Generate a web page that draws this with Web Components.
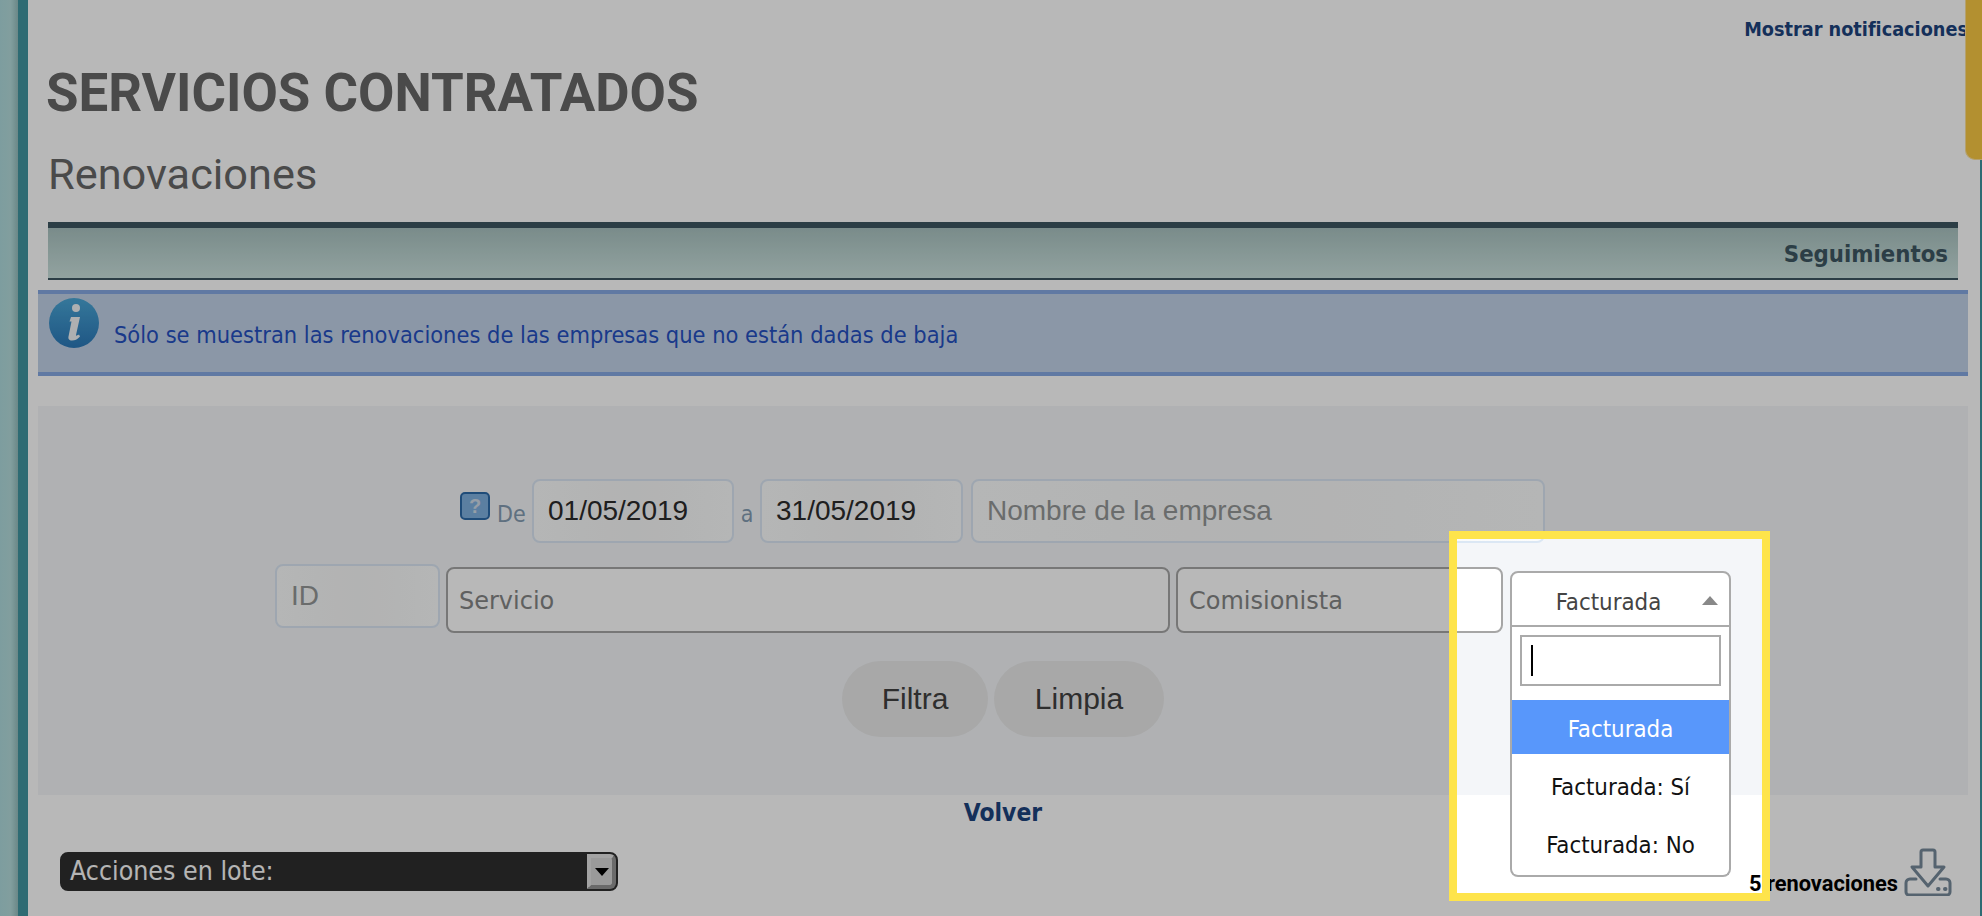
<!DOCTYPE html>
<html lang="es">
<head>
<meta charset="utf-8">
<title>Servicios contratados</title>
<style>
  html, body { margin: 0; height: 916px; overflow: hidden; background: #fff; }
</style>
</head>
<body>
<app-shell>
  <page-heading title="SERVICIOS CONTRATADOS" subtitle="Renovaciones"></page-heading>
  <tab-bar>Seguimientos</tab-bar>
  <info-note>Sólo se muestran las renovaciones de las empresas que no están dadas de baja</info-note>
  <filter-panel></filter-panel>
  <back-link>Volver</back-link>
  <list-footer></list-footer>
</app-shell>
<spot-light></spot-light>

<script>
  const CONDENSED = '"DejaVu Sans Condensed", "DejaVu Sans", sans-serif';
  const ARIAL = '"Liberation Sans", Arial, sans-serif';

  class AppShell extends HTMLElement {
    constructor() {
      super();
      this.attachShadow({ mode: 'open' });
    }

    connectedCallback() {
      this.shadowRoot.innerHTML = `
        <style>
          :host { display: flex; width: 1982px; height: 916px; position: relative; overflow: hidden; }
          .rail { width: 28px; flex: none; display: flex; }
          .rail i { width: 18px; background: linear-gradient(90deg, #aedadd, #b4dcdc 60%, #94bcbc); }
          .rail b { width: 10px; background: #4195a0; }
          main { flex: 1; min-width: 0; padding: 0 14px 0 10px; }
          .notify {
            height: 60px; box-sizing: border-box; padding-top: 18px; text-align: right;
            font: bold 19.700px/24px ${CONDENSED}; color: #1c437d; white-space: nowrap;
          }
          .tab {
            position: absolute; top: 0; right: 0; width: 17px; height: 160px; box-sizing: border-box;
            background: #f9c843; border-left: 1px solid #fbe09a; border-bottom: 1px solid #fbe09a;
            border-bottom-left-radius: 10px;
          }
          .edge { position: absolute; top: 160px; right: 0; bottom: 0; width: 2px; background: #4195a0; }
        </style>
        <div class="rail"><i></i><b></b></div>
        <main>
          <div class="notify">Mostrar notificaciones</div>
          <slot></slot>
        </main>
        <div class="tab"></div>
        <div class="edge"></div>
      `;
    }
  }

  class PageHeading extends HTMLElement {
    constructor() {
      super();
      this.attachShadow({ mode: 'open' });
    }

    connectedCallback() {
      this.shadowRoot.innerHTML = `
        <style>
          :host { display: block; height: 162px; padding-left: 10px; color: #676767; font-family: Roboto, sans-serif; }
          h1 { margin: 0 0 0 -2px; height: 91px; font-size: 52.800px; line-height: 67px; font-weight: 700; }
          h2 { margin: 0; font-size: 43.300px; line-height: 48px; font-weight: 400; }
        </style>
        <h1>${this.getAttribute('title')}</h1>
        <h2>${this.getAttribute('subtitle')}</h2>
      `;
    }
  }

  class TabBar extends HTMLElement {
    constructor() {
      super();
      this.attachShadow({ mode: 'open' });
    }

    connectedCallback() {
      this.shadowRoot.innerHTML = `
        <style>
          :host {
            display: flex; justify-content: flex-end; align-items: center; height: 58px; box-sizing: border-box;
            margin: 0 10px; padding: 2px 10px 0 0;
            border-top: 6px solid #3d5661; border-bottom: 2px solid #3d5661;
            background: linear-gradient(#a9c2c0, #cbe2de);
            font: bold 23.700px ${CONDENSED}; color: #3d5661;
          }
        </style>
        <slot></slot>
      `;
    }
  }

  class InfoNote extends HTMLElement {
    constructor() {
      super();
      this.attachShadow({ mode: 'open' });
    }

    connectedCallback() {
      this.shadowRoot.innerHTML = `
        <style>
          :host {
            display: flex; height: 86px; box-sizing: border-box; margin-top: 10px; padding: 4px 0 0 11px;
            border-top: 4px solid #85a8e2; border-bottom: 4px solid #85a8e2; background: #c1d2e8;
            font: 23.400px ${CONDENSED}; color: #2450c0;
          }
          svg { flex: none; width: 50px; height: 50px; }
          span { margin: 24px 0 0 15px; line-height: 26px; white-space: nowrap; }
        </style>
        <svg viewBox="0 0 50 50">
          <defs>
            <linearGradient id="g" x1="0" y1="0" x2="0" y2="1">
              <stop offset="0" stop-color="#4aa6d6"/>
              <stop offset="1" stop-color="#2b78b8"/>
            </linearGradient>
          </defs>
          <circle cx="25" cy="25" r="25" fill="url(#g)"/>
          <circle cx="27" cy="10" r="4" fill="#f2f4f6"/>
          <path d="M22 19h9l-4 18c0 1 1 1 3-.5l1 2c-3 3-5 4-8 4-3 0-4-2-3.500-4l3-15h-2z" fill="#f2f4f6"/>
        </svg>
        <span><slot></slot></span>
      `;
    }
  }

  class TextField extends HTMLElement {
    constructor() {
      super();
      this.attachShadow({ mode: 'open' });
    }

    connectedCallback() {
      this.shadowRoot.innerHTML = `
        <style>
          :host {
            display: flex; align-items: center; box-sizing: border-box; flex: none;
            height: 64px; padding-left: 14px; border: 2px solid #dbe7f4; border-radius: 8px;
            background: linear-gradient(90deg, #fbfcfc, #f7f8f8 50%, #fbfcfc);
            font: 28px ${ARIAL}; color: #2b2b2b; white-space: nowrap;
          }
          :host([hint]) { color: #939696; }
          :host([plain]) {
            height: 66px; margin-top: 3px; padding: 2px 0 0 11px; border-color: #a6a6a6; border-radius: 8px;
            background: #fff; font: 24px "DejaVu Sans", sans-serif; color: #848585;
          }
        </style>
        <slot></slot>
      `;
    }
  }

  class PillButton extends HTMLElement {
    constructor() {
      super();
      this.attachShadow({ mode: 'open' });
    }

    connectedCallback() {
      this.shadowRoot.innerHTML = `
        <style>
          :host {
            display: flex; align-items: center; justify-content: center; box-sizing: border-box;
            height: 76px; border-radius: 38px; background: #e9e9e9;
            font: 30px ${ARIAL}; color: #414141;
          }
        </style>
        <slot></slot>
      `;
    }
  }

  class SelectBox extends HTMLElement {
    constructor() {
      super();
      this.attachShadow({ mode: 'open' });
    }

    connectedCallback() {
      this.shadowRoot.innerHTML = `
        <style>
          :host {
            display: block; position: relative; flex: none; width: 221px; height: 56px; margin-top: 7px;
            font: 23.800px ${CONDENSED}; color: #111;
          }
          .control {
            height: 56px; box-sizing: border-box; display: flex; align-items: center; justify-content: center;
            padding: 6px 24px 0 0; background: #fff; border: 2px solid #aaa; border-radius: 8px 8px 0 0;
            color: #444;
          }
          .arrow {
            position: absolute; left: 192px; top: 25px; width: 0; height: 0;
            border: 8px solid transparent; border-top: 0; border-bottom: 9px solid #888;
          }
          .menu {
            position: absolute; left: 0; top: 56px; width: 221px; height: 250px; box-sizing: border-box;
            background: #fff; border: 2px solid #aaa; border-top: 0; border-radius: 0 0 8px 8px;
            padding-top: 8px;
          }
          .search {
            box-sizing: border-box; height: 51px; margin: 0 8px 14px; border: 2px solid #aaa;
            display: flex; align-items: center; padding-left: 9px;
          }
          .search i { width: 2px; height: 31px; background: #000; }
          .opt {
            height: 54px; box-sizing: border-box; padding-top: 3px; margin-bottom: 4px;
            display: flex; align-items: center; justify-content: center;
          }
          .opt.on { background: #5897fb; color: #fff; }
        </style>
        <div class="control">Facturada</div>
        <div class="arrow"></div>
        <div class="menu">
          <div class="search"><i></i></div>
          <div class="opt on">Facturada</div>
          <div class="opt">Facturada: Sí</div>
          <div class="opt">Facturada: No</div>
        </div>
      `;
    }
  }

  class FilterPanel extends HTMLElement {
    constructor() {
      super();
      this.attachShadow({ mode: 'open' });
    }

    connectedCallback() {
      this.shadowRoot.innerHTML = `
        <style>
          :host {
            display: flex; flex-direction: column; align-items: center; height: 389px; box-sizing: border-box;
            margin-top: 30px; padding-top: 73px; background: #f4f6f9;
          }
          .row { display: flex; align-items: flex-start; }
          .one { height: 85px; }
          .two { height: 97px; }
          .label { font: 23px/64px ${CONDENSED}; color: #849cb2; padding-top: 3px; height: 61px; }
          .help { flex: none; width: 30px; height: 28px; margin: 13px 7px 0 1px; }
          .btns { display: flex; gap: 6px; }
        </style>
        <div class="row one">
          <svg class="help" viewBox="0 0 30 28">
            <rect x="1" y="1" width="28" height="26" rx="4" fill="#7fb0e0" stroke="#2c6aa8" stroke-width="2"/>
            <text x="15" y="21" text-anchor="middle" font-family="Liberation Sans" font-weight="700" font-size="20" fill="#cfdbe8">?</text>
          </svg>
          <span class="label" style="width:35px">De</span>
          <text-field style="width:202px">01/05/2019</text-field>
          <span class="label" style="width:26px;text-align:center">a</span>
          <text-field style="width:203px">31/05/2019</text-field>
          <text-field hint style="width:574px;margin:0 2px 0 8px">Nombre de la empresa</text-field>
        </div>
        <div class="row two">
          <text-field hint style="width:165px">ID</text-field>
          <text-field plain style="width:724px;margin-left:6px">Servicio</text-field>
          <text-field plain style="width:327px;margin-left:6px">Comisionista</text-field>
          <select-box style="margin-left:7px"></select-box>
        </div>
        <div class="btns">
          <pill-button style="width:146px">Filtra</pill-button>
          <pill-button style="width:170px">Limpia</pill-button>
        </div>
      `;
    }
  }

  class BackLink extends HTMLElement {
    constructor() {
      super();
      this.attachShadow({ mode: 'open' });
    }

    connectedCallback() {
      this.shadowRoot.innerHTML = `
        <style>
          :host {
            display: block; height: 50px; box-sizing: border-box; padding-top: 4px; text-align: center;
            font: bold 24.400px/28px ${CONDENSED}; color: #1c437d;
          }
        </style>
        <slot></slot>
      `;
    }
  }

  class ListFooter extends HTMLElement {
    constructor() {
      super();
      this.attachShadow({ mode: 'open' });
    }

    connectedCallback() {
      this.shadowRoot.innerHTML = `
        <style>
          :host { display: flex; align-items: flex-start; padding: 7px 16px 0 22px; }
          .bulk {
            position: relative; width: 558px; height: 39px; box-sizing: border-box; border-radius: 8px;
            background: #2f2f2f; border: 2px solid #2f2f2f; padding-left: 8px;
            font: 26.500px/34px ${CONDENSED}; color: #fbfbfb;
          }
          .drop {
            position: absolute; top: 0; right: 0; width: 29px; height: 35px; box-sizing: border-box;
            background: #d6d6d6; border: 4px solid; border-color: #e2e2e2 #939393 #939393 #e2e2e2;
            border-radius: 0 6px 6px 0; display: flex; align-items: center; justify-content: center;
          }
          .drop i { width: 0; height: 0; border: 7px solid transparent; border-bottom: 0; border-top: 8px solid #000; }
          .count {
            margin-left: auto; padding-top: 17px; margin-right: 6px;
            font: 700 21.800px/30px Roboto, sans-serif; color: #000; white-space: nowrap;
          }
          svg { flex: none; width: 48px; height: 48px; margin-top: -4px; }
        </style>
        <div class="bulk">Acciones en lote:<div class="drop"><i></i></div></div>
        <div class="count">5 renovaciones</div>
        <svg viewBox="0 0 48 48" fill="none" stroke="#76899a" stroke-width="3" stroke-linejoin="round" stroke-linecap="round">
          <path d="M12 31H6a4 4 0 0 0-4 4v9a3 3 0 0 0 3 3h38a3 3 0 0 0 3-3v-9a4 4 0 0 0-4-4h-6"/>
          <path d="M19 2h10a2 2 0 0 1 2 2v15h9L24 38 8 19h9V4a2 2 0 0 1 2-2z"/>
          <path d="M34 41h.5M41 41h.5" stroke-width="4"/>
        </svg>
      `;
    }
  }

  // yellow frame with a dimmed page around it
  class SpotLight extends HTMLElement {
    constructor() {
      super();
      this.attachShadow({ mode: 'open' });
    }

    connectedCallback() {
      this.shadowRoot.innerHTML = `
        <style>
          :host {
            position: absolute; left: 1449px; top: 531px; width: 321px; height: 370px; box-sizing: border-box;
            border: 8px solid #fee44b; pointer-events: none;
            box-shadow: 0 0 0 3000px rgba(0, 0, 0, .28);
          }
        </style>
      `;
    }
  }

  customElements.define('app-shell', AppShell);
  customElements.define('page-heading', PageHeading);
  customElements.define('tab-bar', TabBar);
  customElements.define('info-note', InfoNote);
  customElements.define('text-field', TextField);
  customElements.define('pill-button', PillButton);
  customElements.define('select-box', SelectBox);
  customElements.define('filter-panel', FilterPanel);
  customElements.define('back-link', BackLink);
  customElements.define('list-footer', ListFooter);
  customElements.define('spot-light', SpotLight);
</script>
</body>
</html>
